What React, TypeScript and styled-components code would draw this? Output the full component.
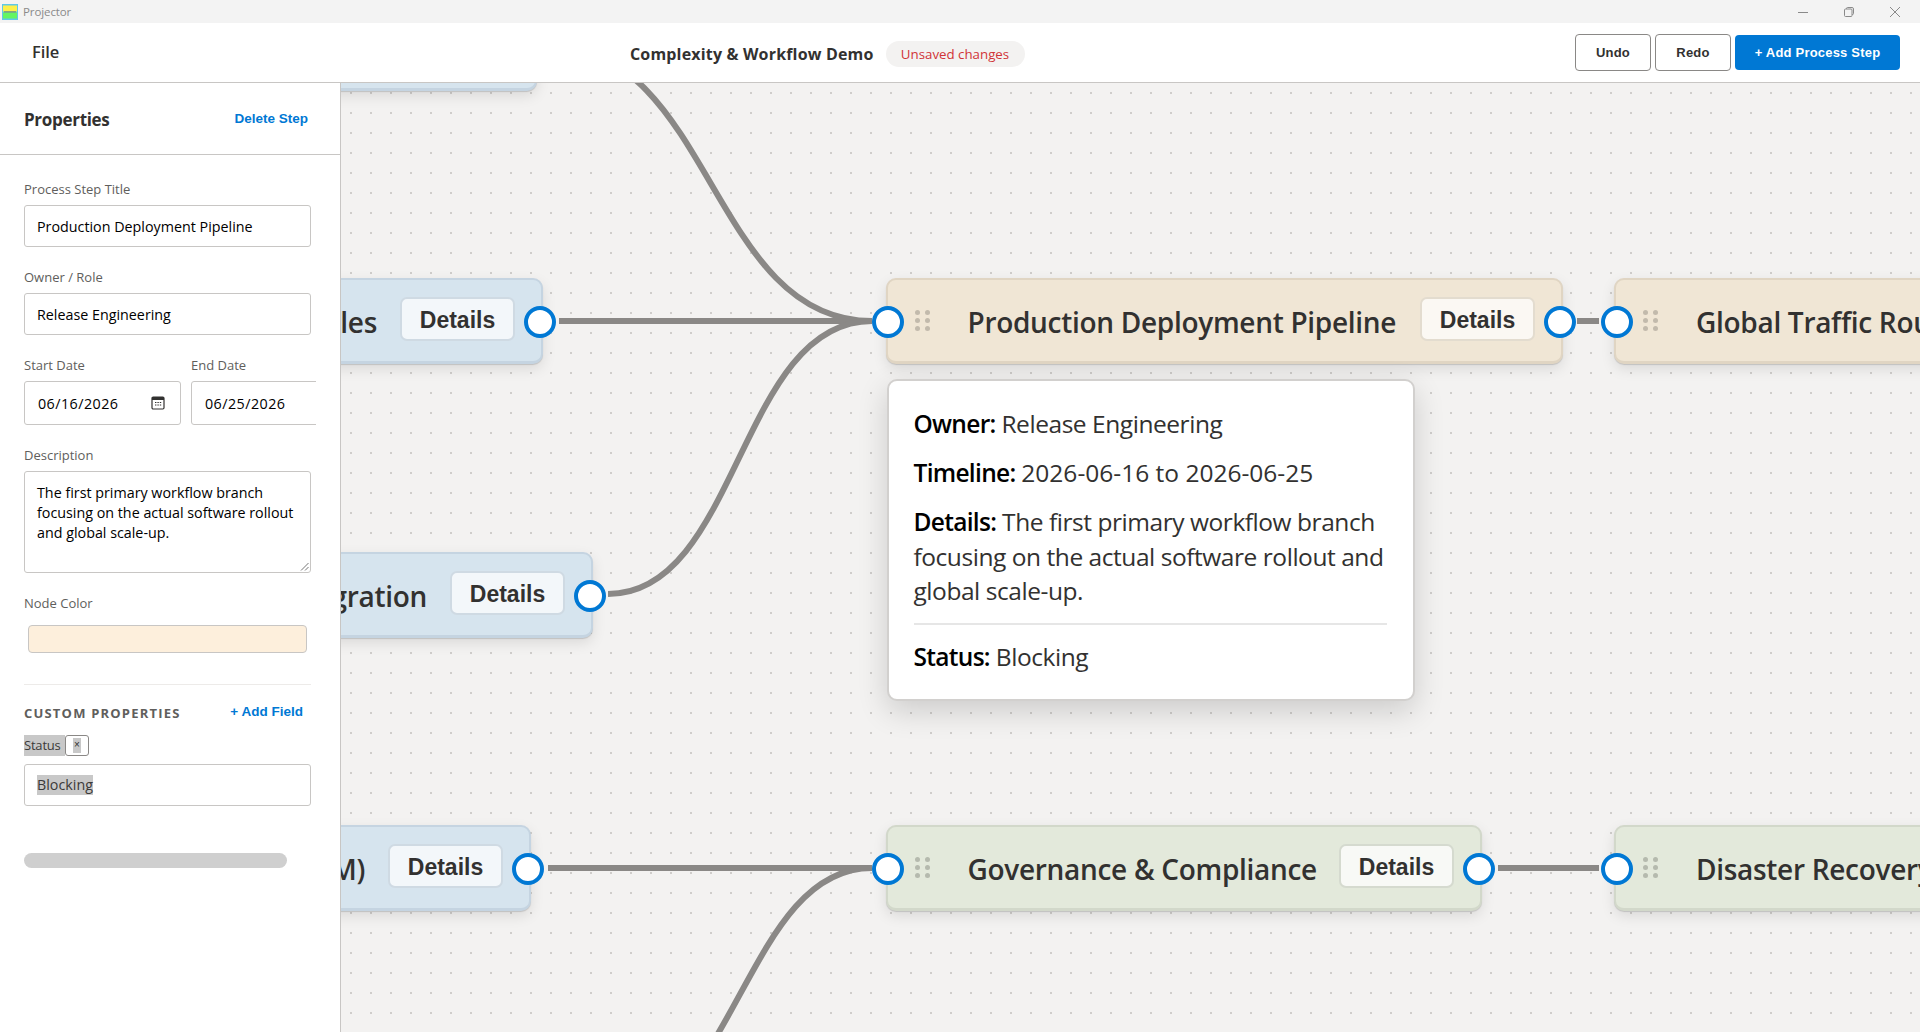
import React from "react";
import styled, { createGlobalStyle } from "styled-components";

const UI = `"Open Sans", "Noto Sans", sans-serif`;
const BTN = `"Liberation Sans", Arial, sans-serif`;

const Global = createGlobalStyle`
  html, body { margin: 0; padding: 0; height: 100%; overflow: hidden; background: #fff; }
  #root { height: 100%; }
  * { box-sizing: border-box; }
`;

const Shell = styled.div`
  width: 1920px; height: 1032px; display: flex; flex-direction: column; overflow: hidden;
  font-family: ${UI}; color: #323130;
`;

/* window chrome */
const TitleBar = styled.div`
  height: 23px; flex: none; background: #f3f3f3; display: flex; align-items: center; padding-left: 2px;
`;
const AppName = styled.span`
  margin-left: 5px; font-size: 11.5px; color: #8a8a8a; letter-spacing: -0.1px;
`;
const WindowControls = styled.div`
  margin-left: auto; display: flex; align-items: center; gap: 36px; padding-right: 20px; height: 100%;
`;

/* app header */
const Header = styled.header`
  height: 60px; flex: none; background: #fff; border-bottom: 1px solid #c8c6c4;
  display: flex; align-items: center; padding: 0 20px 0 32px;
`;
const FileMenu = styled.div`
  width: 28px; font-size: 16.5px; font-weight: 600; color: #323130; margin-top: -2px; letter-spacing: -0.1px;
`;
const Center = styled.div`
  display: flex; align-items: center; gap: 12px; margin-top: 2px; margin-left: 570px;
`;
const DocTitle = styled.div`
  font-size: 16px; font-weight: 700; letter-spacing: 0.17px; color: #323130; white-space: nowrap;
`;
const Pill = styled.div`
  height: 26px; width: 139px; border-radius: 13px; background: #f3f2f1; color: #d13438;
  font-size: 13.3px; display: flex; align-items: center; justify-content: center;
`;
const Actions = styled.div`
  margin-left: auto; display: flex; align-items: center; gap: 4px; margin-top: -1px;
`;
const OutlineButton = styled.button`
  width: 76px; height: 37px; background: #fff; border: 1px solid #8a8886; border-radius: 4px;
  font: 700 13px ${BTN}; color: #323130; letter-spacing: 0.2px; padding: 0;
`;
const PrimaryButton = styled.button`
  width: 165px; height: 35px; background: #0078d4; border: 0; border-radius: 4px;
  font: 700 13px ${BTN}; color: #fff; letter-spacing: 0.2px; padding: 0;
`;

const Main = styled.div`
  flex: 1; display: flex; min-height: 0;
`;

/* sidebar */
const Sidebar = styled.aside`
  width: 341px; flex: none; background: #fff; border-right: 1px solid #c8c6c4; position: relative; z-index: 2;
  overflow: hidden;
`;
const SideHead = styled.div`
  height: 72px; border-bottom: 1px solid #c8c6c4; display: flex; align-items: center; justify-content: space-between;
  padding: 0 32px 0 24px;
`;
const SideTitle = styled.h2`
  margin: 2px 0 0; font-size: 17px; font-weight: 700; letter-spacing: -0.3px; color: #323130;
`;
const LinkButton = styled.button`
  background: none; border: 0; padding: 0; font: 700 13.5px ${BTN}; color: #0078d4; cursor: pointer;
`;
const Form = styled.div`
  width: 292px; margin-left: 24px; padding-top: 25px; overflow: hidden;
`;
const Field = styled.div`
  margin-bottom: 21px; width: 287px;
`;
const Label = styled.label`
  display: block; height: 18px; line-height: 18px; margin-bottom: 7px; font-size: 13px; font-weight: 500; color: #605e5c;
`;
const TextInput = styled.div`
  height: 42px; width: 287px; border: 1px solid #c8c6c4; border-radius: 3px; padding: 0 12px;
  display: flex; align-items: center; font-size: 14.3px; color: #000; white-space: nowrap;
`;
const DateRow = styled.div`
  display: flex; gap: 10px; width: 320px; margin-bottom: 21px;
`;
const DateCol = styled.div`
  flex: none; width: 157px;
`;
const DateBox = styled.div`
  height: 44px; width: 157px; border: 1px solid #c8c6c4; border-radius: 3px; padding: 0 15px 0 13px;
  display: flex; align-items: center; justify-content: space-between; font-size: 14.3px; letter-spacing: 0.45px; color: #000;
`;
const TextArea = styled.div`
  height: 102px; width: 287px; border: 1px solid #c8c6c4; border-radius: 3px; padding: 11px 12px; position: relative;
  font-size: 14.3px; line-height: 20px; color: #000;
`;
const Grip = styled.svg`
  position: absolute; right: 1px; bottom: 1px;
`;
const Swatch = styled.div`
  height: 28px; width: 279px; margin: 13px 0 0 4px; background: #fdefdc; border: 1px solid #c8c6c4; border-radius: 4px;
`;
const Divider = styled.div`
  height: 1px; width: 287px; background: #edebe9; margin-top: 31px;
`;
const CustomHead = styled.div`
  width: 287px; display: flex; justify-content: space-between; align-items: center; padding-right: 8px; margin-top: 17px; height: 22px;
  & > button { margin-top: -3px; }
`;
const SectionTitle = styled.div`
  font-size: 13px; font-weight: 700; color: #605e5c; letter-spacing: 1.2px; text-transform: uppercase; margin-top: 0; white-space: nowrap;
`;
const KeyRow = styled.div`
  display: flex; align-items: center; height: 21px; margin-top: 11px; margin-bottom: 8px;
`;
const KeyText = styled.span`
  background: #c8c8c8; height: 21px; line-height: 21px; width: 41px; font-size: 13px; font-weight: 500; letter-spacing: -0.2px; color: #3b3a39;
`;
const RemoveKey = styled.button`
  width: 24px; height: 21px; background: #fff; border: 1px solid #8a8886; border-radius: 3px; padding: 0;
  display: flex; align-items: center; justify-content: center;
`;
const RemoveGlyph = styled.span`
  background: #c8c8c8; width: 8px; height: 15px; font: 10px/14px ${BTN}; color: #323130; text-align: center;
`;
const Selected = styled.span`
  background: #c8c8c8; color: #3b3a39; line-height: 20px; display: inline-block; height: 20px;
`;
const HScroll = styled.div`
  width: 263px; height: 15px; border-radius: 8px; background: #cfcfcf; margin-top: 47px;
`;

/* canvas */
const Canvas = styled.main`
  flex: 1; position: relative; overflow: hidden; background-color: #f3f2f1;
  background-image: radial-gradient(circle at center, #cfcdcb 1px, transparent 1.2px);
  background-size: 20px 20px;
`;
const Edges = styled.svg`
  position: absolute; left: 0; top: 0; width: 100%; height: 100%;
`;
const palette = {
  blue: { bg: "#d6e4ee", border: "#c5d4e1", dot: "#a9b8c4", btn: "#f3f7fa", btnBorder: "#cfdae3" },
  tan: { bg: "#f0e6d5", border: "#e0d5c3", dot: "#c2baac", btn: "#fbf8f3", btnBorder: "#e3dccf" },
  green: { bg: "#e3e9db", border: "#d2d8ca", dot: "#b5baae", btn: "#f8f9f6", btnBorder: "#d5dacf" },
};
type Tone = keyof typeof palette;
const Node = styled.div<{ $x: number; $y: number; $w: number; $tone: Tone }>`
  position: absolute; left: ${(p) => p.$x}px; top: ${(p) => p.$y}px; width: ${(p) => p.$w}px; height: 86px;
  background: ${(p) => palette[p.$tone].bg}; border: 2px solid ${(p) => palette[p.$tone].border}; border-bottom-width: 3px;
  border-radius: 10px; box-shadow: 0 1px 1px rgba(0, 0, 0, 0.14), 0 5px 14px rgba(0, 0, 0, 0.1);
  display: flex; align-items: center; padding-right: 26px;
`;
const Port = styled.span<{ $side: "left" | "right" }>`
  position: absolute; top: 25.5px; ${(p) => (p.$side === "left" ? "left: -15.5px;" : "right: -14.5px;")}
  width: 32px; height: 32px; border-radius: 50%; background: #fff; border: 4px solid #0078d4; z-index: 1;
`;
const Dots = styled.div<{ $tone: Tone }>`
  flex: none; margin-left: 27px; margin-top: -1px; display: grid; grid-template-columns: 5px 5px; grid-auto-rows: 5px; gap: 3px 5px;
  & > i { display: block; border-radius: 50%; background: ${(p) => palette[p.$tone].dot}; }
`;
const NodeTitle = styled.div<{ $clip?: boolean }>`
  flex: 1; font-size: 28px; font-weight: 600; line-height: 40px; white-space: nowrap; color: #323130; letter-spacing: -0.3px;
  margin-top: 2px; padding-left: ${(p) => (p.$clip ? 0 : 38)}px; text-align: ${(p) => (p.$clip ? "right" : "left")};
  margin-right: ${(p) => (p.$clip ? 23 : 0)}px;
`;
const DetailsButton = styled.button<{ $tone: Tone }>`
  flex: none; width: 115px; height: 44px; margin-top: -3px; background: ${(p) => palette[p.$tone].btn};
  border: 2px solid ${(p) => palette[p.$tone].btnBorder}; border-radius: 7px; padding: 3px 0 0;
  font: 700 23px ${BTN}; color: #323130;
`;
const Tooltip = styled.div`
  position: absolute; left: 546px; top: 295.5px; width: 527.5px; height: 322px; background: #fff; border: 2px solid #d2d0ce; border-radius: 10px;
  box-shadow: 0 10px 30px rgba(0, 0, 0, 0.16); padding: 26.5px 26px 0 24.5px; z-index: 3; font-size: 24.5px; line-height: 34.5px; color: #323130;
  letter-spacing: -0.45px;
`;
const TipLine = styled.p`
  margin: 0 0 14.5px;
  & b { color: #000; font-weight: 600; letter-spacing: -0.7px; }
`;
const TipDate = styled.span`
  letter-spacing: 0;
`;
const TipRule = styled.div`
  border-top: 2px solid #e6e6e6; margin-top: 14px; padding-top: 15px;
`;

const WinGlyph = styled.svg`
  display: block; flex: none;
`;

function DragDots({ tone }: { tone: Tone }) {
  return (
    <Dots $tone={tone}>
      {Array.from({ length: 6 }, (_, i) => (
        <i key={i} />
      ))}
    </Dots>
  );
}

const stroke = { stroke: "#8a8886", strokeWidth: 6, fill: "none" } as const;

export default function App() {
  return (
    <Shell>
      <Global />
      <TitleBar>
        <WinGlyph width="16" height="16" viewBox="0 0 16 16">
          <rect width="16" height="16" fill="#5fc8e8" />
          <rect x="1" y="1.5" width="14" height="6" fill="#fdf04a" />
          <rect x="1" y="8.5" width="14" height="6" fill="#63f563" />
          <rect x="2" y="7.2" width="12" height="1.4" fill="#7a9a78" />
        </WinGlyph>
        <AppName>Projector</AppName>
        <WindowControls>
          <WinGlyph width="10" height="10" viewBox="0 0 10 10">
            <path d="M0 5.5H10" stroke="#8a8a8a" strokeWidth="1" />
          </WinGlyph>
          <WinGlyph width="10" height="10" viewBox="0 0 10 10" fill="none">
            <rect x=".5" y="2" width="7.5" height="7.5" rx="1" stroke="#8a8a8a" />
            <path d="M2.5 2V1.5A1 1 0 0 1 3.5.5H8A1.5 1.5 0 0 1 9.5 2V6.5A1 1 0 0 1 8.5 7.5H8" stroke="#8a8a8a" />
          </WinGlyph>
          <WinGlyph width="10" height="10" viewBox="0 0 10 10">
            <path d="M0 0L10 10M10 0L0 10" stroke="#8a8a8a" strokeWidth="1" />
          </WinGlyph>
        </WindowControls>
      </TitleBar>
      <Header>
        <FileMenu>File</FileMenu>
        <Center>
          <DocTitle>Complexity &amp; Workflow Demo</DocTitle>
          <Pill>Unsaved changes</Pill>
        </Center>
        <Actions>
          <OutlineButton>Undo</OutlineButton>
          <OutlineButton>Redo</OutlineButton>
          <PrimaryButton>+ Add Process Step</PrimaryButton>
        </Actions>
      </Header>
      <Main>
        <Sidebar>
          <SideHead>
            <SideTitle>Properties</SideTitle>
            <LinkButton>Delete Step</LinkButton>
          </SideHead>
          <Form>
            <Field>
              <Label>Process Step Title</Label>
              <TextInput>Production Deployment Pipeline</TextInput>
            </Field>
            <Field>
              <Label>Owner / Role</Label>
              <TextInput>Release Engineering</TextInput>
            </Field>
            <DateRow>
              <DateCol>
                <Label>Start Date</Label>
                <DateBox>
                  06/16/2026
                  <WinGlyph width="14" height="14" viewBox="0 0 14 14" fill="none">
                    <rect x="1" y="1" width="12" height="12" rx="1.2" stroke="#323130" strokeWidth="1.2" />
                    <rect x="1" y="1" width="12" height="3" fill="#323130" />
                    <path d="M4 6.5h1.4M6.4 6.5h1.4M8.8 6.5h1.4M4 9h1.4M6.4 9h1.4M8.8 9h1.4" stroke="#323130" strokeWidth="1.2" />
                  </WinGlyph>
                </DateBox>
              </DateCol>
              <DateCol>
                <Label>End Date</Label>
                <DateBox>06/25/2026</DateBox>
              </DateCol>
            </DateRow>
            <Field>
              <Label>Description</Label>
              <TextArea>
                The first primary workflow branch focusing on the actual software rollout and global scale-up.
                <Grip width="9" height="9" viewBox="0 0 9 9">
                  <path d="M1 8.5L8.5 1M5 8.5L8.5 5" stroke="#777" strokeWidth="1" />
                </Grip>
              </TextArea>
            </Field>
            <Label>Node Color</Label>
            <Swatch />
            <Divider />
            <CustomHead>
              <SectionTitle>Custom Properties</SectionTitle>
              <LinkButton>+ Add Field</LinkButton>
            </CustomHead>
            <KeyRow>
              <KeyText>Status</KeyText>
              <RemoveKey>
                <RemoveGlyph>×</RemoveGlyph>
              </RemoveKey>
            </KeyRow>
            <TextInput>
              <Selected>Blocking</Selected>
            </TextInput>
            <HScroll />
          </Form>
        </Sidebar>
        <Canvas>
          <Edges>
            <path d="M212 -35 C370 -35 370 238 531 238" {...stroke} />
            <path d="M218 238 H531" {...stroke} />
            <path d="M267 511 C398 511 398 238 531 238" {...stroke} />
            <path d="M207 785 H531" {...stroke} />
            <path d="M230 1060 C397 1060 397 785 531 785" {...stroke} />
            <path d="M1236 238 H1258" {...stroke} />
            <path d="M1157 785 H1258" {...stroke} />
          </Edges>
          <Node $x={-40} $y={-78} $w={236} $tone="blue" />
          <Node $x={-40} $y={195} $w={242} $tone="blue">
            <Port $side="right" />
            <NodeTitle $clip>les</NodeTitle>
            <DetailsButton $tone="blue">Details</DetailsButton>
          </Node>
          <Node $x={-40} $y={469} $w={292} $tone="blue">
            <Port $side="right" />
            <NodeTitle $clip>gration</NodeTitle>
            <DetailsButton $tone="blue">Details</DetailsButton>
          </Node>
          <Node $x={-40} $y={742} $w={230} $tone="blue">
            <Port $side="right" />
            <NodeTitle $clip>M)</NodeTitle>
            <DetailsButton $tone="blue">Details</DetailsButton>
          </Node>
          <Node $x={544.5} $y={195} $w={677.5} $tone="tan">
            <Port $side="left" />
            <DragDots tone="tan" />
            <NodeTitle>Production Deployment Pipeline</NodeTitle>
            <DetailsButton $tone="tan">Details</DetailsButton>
            <Port $side="right" />
          </Node>
          <Node $x={1273} $y={195} $w={500} $tone="tan">
            <Port $side="left" />
            <DragDots tone="tan" />
            <NodeTitle>Global Traffic Routing</NodeTitle>
          </Node>
          <Node $x={544.5} $y={742} $w={596.5} $tone="green">
            <Port $side="left" />
            <DragDots tone="green" />
            <NodeTitle>Governance &amp; Compliance</NodeTitle>
            <DetailsButton $tone="green">Details</DetailsButton>
            <Port $side="right" />
          </Node>
          <Node $x={1273} $y={742} $w={500} $tone="green">
            <Port $side="left" />
            <DragDots tone="green" />
            <NodeTitle>Disaster Recovery</NodeTitle>
          </Node>
          <Tooltip>
            <TipLine>
              <b>Owner:</b> Release Engineering
            </TipLine>
            <TipLine>
              <b>Timeline:</b> <TipDate>2026-06-16 to 2026-06-25</TipDate>
            </TipLine>
            <TipLine>
              <b>Details:</b> The first primary workflow branch focusing on the actual software rollout and global scale-up.
            </TipLine>
            <TipRule>
              <TipLine>
                <b>Status:</b> Blocking
              </TipLine>
            </TipRule>
          </Tooltip>
        </Canvas>
      </Main>
    </Shell>
  );
}
